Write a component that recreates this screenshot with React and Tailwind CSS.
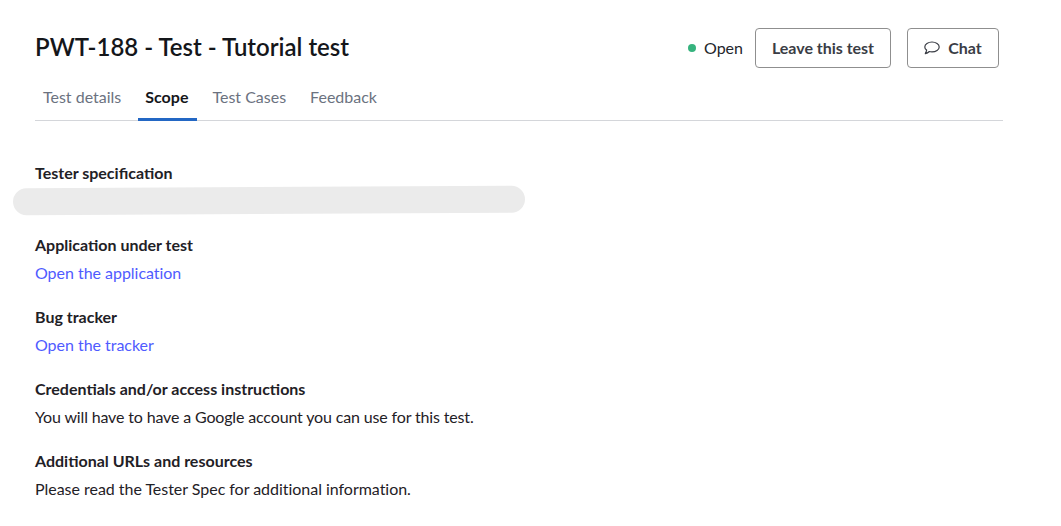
const tabs = ["Test details", "Scope", "Test Cases", "Feedback"];

const sections = [
  { label: "Application under test", value: "Open the application", link: true },
  { label: "Bug tracker", value: "Open the tracker", link: true },
  {
    label: "Credentials and/or access instructions",
    value: "You will have to have a Google account you can use for this test.",
    tight: true,
  },
  { label: "Additional URLs and resources", value: "Please read the Tester Spec for additional information." },
];

function ChatIcon() {
  return (
    <svg viewBox="0 0 16 14" className="h-[14px] w-4" fill="none" stroke="currentColor" strokeWidth="1.2" strokeLinejoin="round" aria-hidden="true">
      <path d="M8 1C4.1 1 .8 3.1.8 5.9c0 1.3.7 2.4 1.8 3.2-.1 1.1-.6 2.2-1.3 3.6 1.6-.4 3-1.2 4-2.2.8.2 1.7.3 2.7.3 3.9 0 7.2-2.1 7.2-4.9S11.9 1 8 1Z" />
    </svg>
  );
}

export default function App() {
  return (
    <div className="h-[526px] w-[1061px] overflow-hidden bg-white font-['Lato',sans-serif] text-[#1f2126]">
      <main className="pl-[35px] pr-[58px] pt-[28px]">
        <header className="flex h-[40px] items-center justify-between pr-[4px]">
          <h1 className="-mt-[3px] text-[24px] font-semibold leading-[38px] text-[#14161a]">PWT-188 - Test - Tutorial test</h1>
          <div className="flex items-center">
            <span className="h-2 w-2 rounded-full bg-[#36b37e]" />
            <span className="ml-2 text-[16px] text-[#23262b]">Open</span>
            <button type="button" className="ml-3 h-[40px] w-[136px] rounded border border-[#8f8f8f] text-[16px] font-bold tracking-[-0.02px] text-[#3a3d45]">
              Leave this test
            </button>
            <button type="button" className="ml-4 flex h-[40px] w-[92px] items-center justify-center gap-2 rounded border border-[#8f8f8f] text-[16px] font-bold text-[#3a3d45]">
              <ChatIcon />
              Chat
            </button>
          </div>
        </header>

        <nav className="mt-[12px] flex h-[41px] gap-2 border-b border-[#d4d6da]">
          {tabs.map((tab) => (
            <div
              key={tab}
              className={`-mb-px flex items-center border-b-[3px] pb-[5px] text-[16px] ${
                tab === "Scope"
                  ? "ml-px -mr-px border-[#2367c4] pl-[7px] pr-[9px] font-bold text-[#14161a]"
                  : "border-transparent px-2 text-[#6b7280]"
              }`}
            >
              {tab}
            </div>
          ))}
        </nav>

        <section className="mt-[38px] flex flex-col gap-[16px]">
          <div className="pb-px">
            <p className="text-[16px] font-bold leading-[28px]">Tester specification</p>
            <div className="-ml-[22px] h-[27px] w-[512px] -rotate-[0.3deg] rounded-full bg-[#ebebeb]" />
          </div>
          {sections.map((s) => (
            <div key={s.label}>
              <p className="text-[16px] font-bold leading-[28px]">{s.label}</p>
              <p
                className={`text-[16px] leading-[28px] ${s.link ? "text-[#4f5bff]" : "text-[#1f2126]"} ${
                  s.tight ? "tracking-[-0.15px]" : "tracking-[-0.03px]"
                }`}
              >
                {s.value}
              </p>
            </div>
          ))}
        </section>
      </main>
    </div>
  );
}
